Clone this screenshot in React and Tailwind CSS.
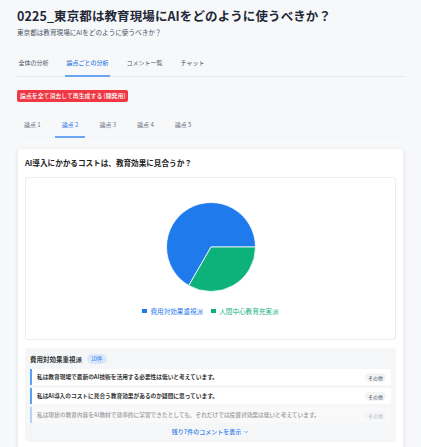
import { ChevronDown } from 'lucide-react'

const mainTabs = ['全体の分析', '論点ごとの分析', 'コメント一覧', 'チャット']
const issueTabs = ['論点 1', '論点 2', '論点 3', '論点 4', '論点 5']

const comments = [
  { text: '私は教育現場で最新のAI技術を活用する必要性は低いと考えています。', tag: 'その他' },
  { text: '私はAI導入のコストに見合う教育効果があるのか疑問に思っています。', tag: 'その他' },
  {
    text: '私は現状の教育内容をAI教材で効率的に学習できたとしても、それだけでは投資対効果は低いと考えています。',
    tag: 'その他',
    faded: true,
  },
]

function Pie() {
  // blue 10, green 5 -> green spans 0..120deg clockwise
  return (
    <svg width="100" height="100" viewBox="0 0 100 100">
      <path d="M50 50 L27.75 88.54 A44.5 44.5 0 1 1 94.5 50 Z" fill="#1f7aec" stroke="#fff" strokeWidth="0.8" />
      <path d="M50 50 L94.5 50 A44.5 44.5 0 0 1 27.75 88.54 Z" fill="#0db27a" stroke="#fff" strokeWidth="0.8" />
    </svg>
  )
}

export default function App() {
  return (
    <div className="min-h-screen bg-[#f7f8fa] px-[17px] pt-[8px] font-['Noto_Sans_CJK_JP','Noto_Sans',sans-serif] text-[#1f2937]">
      <h1 className="text-[12.5px] leading-[16px] font-bold tracking-[0.1px]">
        0225_東京都は教育現場にAIをどのように使うべきか？
      </h1>
      <p className="mt-[4px] text-[6.6px] leading-[9px] text-gray-600">東京都は教育現場にAIをどのように使うべきか？</p>

      <div className="mt-[17px] flex gap-[15px] border-b border-gray-200">
        {mainTabs.map((t, i) => (
          <div
            key={t}
            className={`-mb-px h-[23px] border-b-2 px-[1.5px] pt-[5px] text-[6px] leading-[8px] ${
              i === 1 ? 'border-[#6aa6f2] font-medium text-[#2f7de8]' : 'border-transparent text-gray-600'
            }`}
          >
            {t}
          </div>
        ))}
      </div>

      <div className="mt-[13px] flex">
        <div className="flex h-[12px] items-center rounded-[2px] bg-[#ee3843] px-[3px] text-[5.9px] font-medium leading-none text-white">
          論点を全て消去して再生成する (開発用)
        </div>
      </div>

      <div className="mt-[10px] flex gap-[7px] border-b border-gray-100">
        {issueTabs.map((t, i) => (
          <div
            key={t}
            className={`-mb-px h-[26px] border-b-2 px-[7px] pt-[9px] text-[6px] leading-[8px] ${
              i === 1 ? 'border-[#6aa6f2] text-[#2f7de8]' : 'border-transparent text-gray-500'
            }`}
          >
            {t}
          </div>
        ))}
      </div>

      <div className="mt-[10px] rounded-[4px] border border-gray-100 bg-white px-[7px] pt-[9px] pb-[8px] shadow-sm">
        <h2 className="text-[7.6px] leading-[10px] font-bold text-[#222]">AI導入にかかるコストは、教育効果に見合うか？</h2>

        <div className="mt-[9px] flex h-[163px] flex-col items-center rounded-[3px] border border-gray-200/70 bg-white">
          <div className="mt-[19px]">
            <Pie />
          </div>
          <div className="mt-[10px] flex items-center gap-[8px] text-[6.6px] leading-[8px]">
            <div className="flex items-center gap-[3px] text-[#1f7aec]">
              <span className="h-[4px] w-[5px] bg-[#1f7aec]" />
              費用対効果重視派
            </div>
            <div className="flex items-center gap-[3px] text-[#0db27a]">
              <span className="h-[4px] w-[5px] bg-[#0db27a]" />
              人間中心教育充実派
            </div>
          </div>
        </div>

        <div className="mt-[8px] rounded-[4px] bg-[#f5f6f8] px-[5px] pt-[6px] pb-[6px]">
          <div className="flex items-center gap-[5px]">
            <span className="text-[6.5px] leading-[8px] font-semibold text-[#333]">費用対効果重視派</span>
            <span className="rounded-full bg-[#dbe8fb] px-[4px] text-[5.5px] leading-[10px] text-[#2f7de8]">10件</span>
          </div>
          <div className="mt-[5px] flex flex-col gap-[3px]">
            {comments.map((c) => (
              <div
                key={c.text}
                className={`flex h-[16px] items-center justify-between rounded-r-[2px] border-l-2 border-[#5aa0f4] bg-white pr-[5px] pl-[5px] ${
                  c.faded ? 'opacity-40' : ''
                }`}
              >
                <span className="text-[5.7px] leading-[8px] font-semibold text-[#333]">{c.text}</span>
                <span className="rounded-full bg-gray-100 px-[3px] text-[5px] leading-[9px] text-gray-600">{c.tag}</span>
              </div>
            ))}
          </div>
          <div className="mt-[5px] flex items-center justify-center gap-[2px] text-[6px] leading-[8px] font-medium text-[#2f7de8]">
            残り7件のコメントを表示
            <ChevronDown className="h-[6px] w-[6px]" strokeWidth={2.5} />
          </div>
        </div>
      </div>
    </div>
  )
}
